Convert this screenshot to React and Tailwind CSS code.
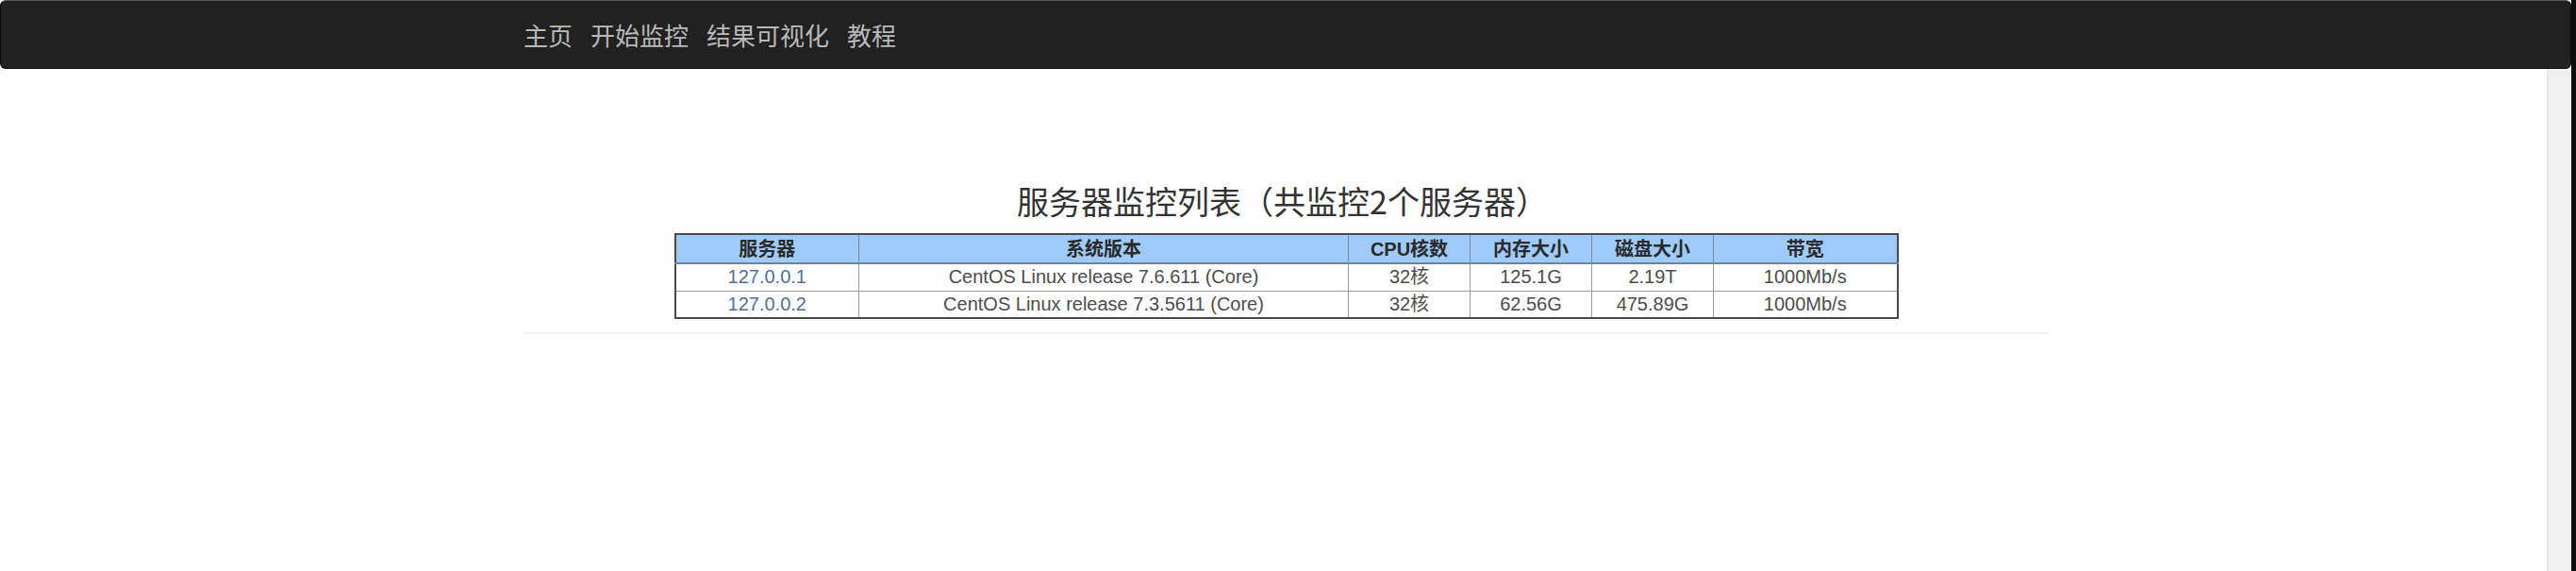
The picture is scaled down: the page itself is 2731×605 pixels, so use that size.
import React from "react";

const navItems = ["主页", "开始监控", "结果可视化", "教程"];

const rows = [
  { ip: "127.0.0.1", os: "CentOS Linux release 7.6.611 (Core)", cpu: "32核", mem: "125.1G", disk: "2.19T", bw: "1000Mb/s" },
  { ip: "127.0.0.2", os: "CentOS Linux release 7.3.5611 (Core)", cpu: "32核", mem: "62.56G", disk: "475.89G", bw: "1000Mb/s" },
];

export default function App() {
  return (
    <div className="flex w-[2731px] h-[605px] bg-white overflow-hidden">
      <div className="flex flex-col w-[2726px] h-full">
        <nav className="h-[73px] shrink-0 bg-[#212121] border border-[#0a0a0a] border-t-[#5a5a5a] rounded-[6px] flex items-center pl-[554px] gap-[19px] font-['Noto_Sans_CJK_SC','Noto_Sans',sans-serif] text-[26px] text-[#b9b9b9]">
          {navItems.map((t) => (
            <span key={t} className="leading-none">{t}</span>
          ))}
        </nav>
        <div className="flex flex-1">
          <div className="flex-1">
            <div className="ml-[555px] w-[1617px] pt-[120px] pb-[14px] border-b-2 border-[#f1f1f1] flex flex-col items-center">
              <h3 className="text-[34px] leading-[40px] text-[#333] font-['Noto_Sans_CJK_SC','Noto_Sans',sans-serif] mr-[8px]">
                服务器监控列表（共监控2个服务器）
              </h3>
              <table className="mt-[14px] w-[1296px] table-fixed border-collapse border-2 border-[#4a4a4a] text-[20px] font-['Liberation_Sans','Noto_Sans_CJK_SC',sans-serif] text-center">
                <colgroup>
                  <col className="w-[195px]" />
                  <col className="w-[519px]" />
                  <col className="w-[129px]" />
                  <col className="w-[129px]" />
                  <col className="w-[129px]" />
                  <col className="w-[195px]" />
                </colgroup>
                <thead>
                  <tr className="bg-[#9fcbfa] h-[31px] text-[#2a2a2a] font-bold">
                    {["服务器", "系统版本", "CPU核数", "内存大小", "磁盘大小", "带宽"].map((h) => (
                      <th key={h} className="border border-[#7d8a96] border-b-2 border-b-[#6f8397] p-0 leading-[28px]">{h}</th>
                    ))}
                  </tr>
                </thead>
                <tbody>
                  {rows.map((r) => (
                    <tr key={r.ip} className="h-[29px] text-[#4d4d4d]">
                      <td className="border border-[#9a9a9a] p-0 leading-[27px] text-[#52729a]">{r.ip}</td>
                      <td className="border border-[#9a9a9a] p-0 leading-[27px]">{r.os}</td>
                      <td className="border border-[#9a9a9a] p-0 leading-[27px]">{r.cpu}</td>
                      <td className="border border-[#9a9a9a] p-0 leading-[27px]">{r.mem}</td>
                      <td className="border border-[#9a9a9a] p-0 leading-[27px]">{r.disk}</td>
                      <td className="border border-[#9a9a9a] p-0 leading-[27px]">{r.bw}</td>
                    </tr>
                  ))}
                </tbody>
              </table>
            </div>
          </div>
          <div className="w-[26px] h-full bg-[#f0f0f0] border-l-2 border-[#e6e6e6]" />
        </div>
      </div>
      <div className="w-[5px] h-full bg-[#0d0d0d]" />
    </div>
  );
}
